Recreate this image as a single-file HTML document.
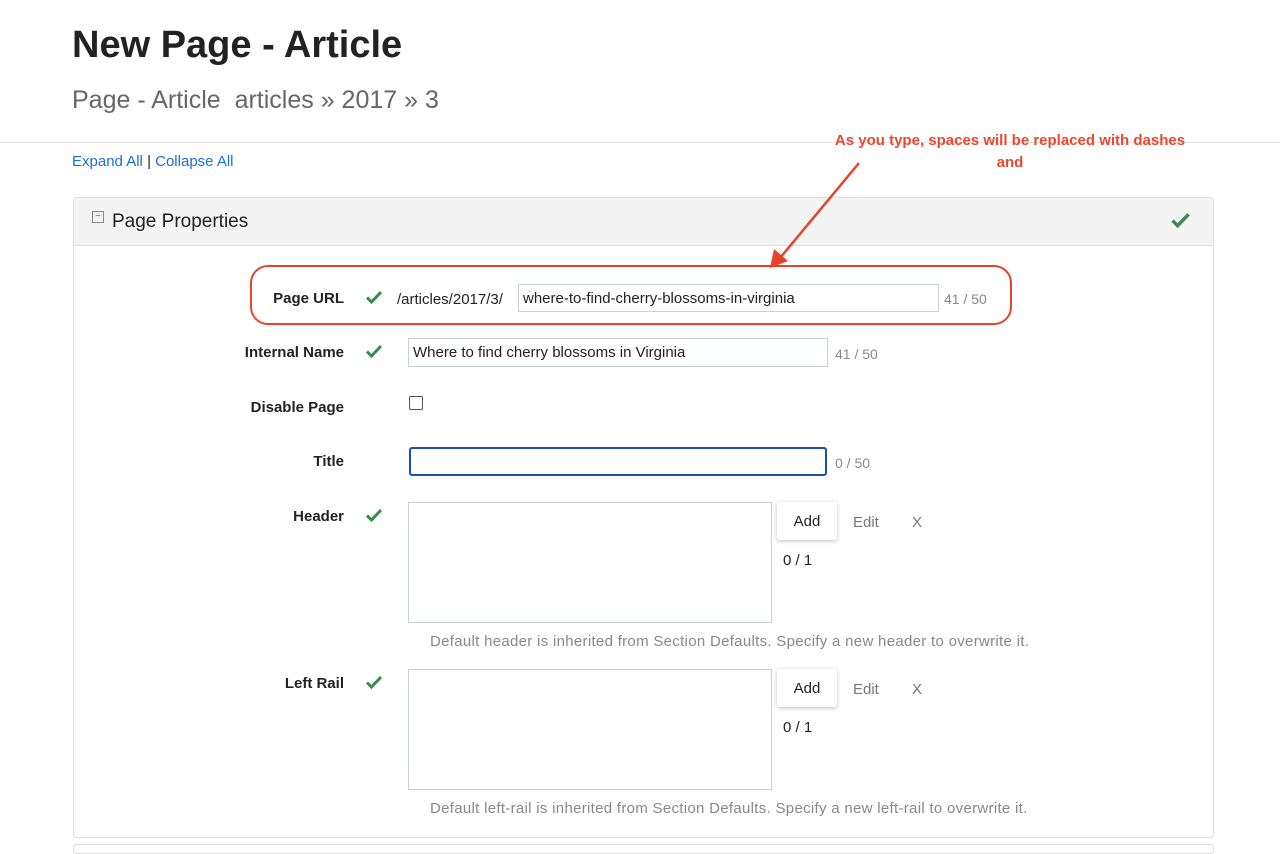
<!DOCTYPE html>
<html><head><meta charset="utf-8"><style>
*{box-sizing:border-box;margin:0;padding:0}
body{width:1280px;height:848px;overflow:hidden;background:#fff;font-family:"Liberation Sans",sans-serif;color:#222;position:relative}
.a{position:absolute;white-space:nowrap}
.lbl{font-weight:bold;font-size:15px;color:#222;text-align:right;width:200px}
.chk{position:absolute;width:16px;height:14px}
.inp{position:absolute;border:1px solid #c8d0dc;background:#fff;font-size:15px;padding:5px 4px 0;color:#222}
.cnt{font-size:14px;color:#888}
.btn{position:absolute;width:60px;height:38px;background:#fff;border-radius:3px;box-shadow:0 1px 4px rgba(0,0,0,.25);font-size:15px;text-align:center;line-height:40px}
.gray{color:#777;font-size:15px}
.help{font-size:15px;color:#888;letter-spacing:0.3px}
</style></head><body>
<div class="a" style="left:72px;top:24px;font-size:38px;font-weight:bold;color:#222">New Page - Article</div>
<div class="a" style="left:72px;top:86px;font-size:25px;color:#666">Page - Article&nbsp; articles » 2017 » 3</div>
<div class="a" style="left:0;top:142px;width:1280px;border-top:1px solid #e3e3e3"></div>
<div class="a" style="left:72px;top:153px;font-size:15px;color:#1a6fd8">Expand All <span style="color:#222">|</span> Collapse All</div>
<div class="a" style="left:810px;top:130px;width:400px;text-align:center;font-size:15px;font-weight:bold;color:#e8492f;line-height:22px;white-space:normal">As you type, spaces will be replaced with dashes<br>and</div>
<div class="a" style="left:73px;top:197px;width:1141px;height:641px;border:1px solid #ddd;border-radius:4px"></div>
<div class="a" style="left:74px;top:198px;width:1139px;height:48px;background:#f4f4f4;border-bottom:1px solid #ddd;border-radius:4px 4px 0 0"></div>
<div class="a" style="left:92px;top:211px;width:12px;height:12px;border:1px solid #888;font-size:10px;line-height:9px;text-align:center;color:#666">−</div>
<div class="a" style="left:112px;top:211px;font-size:19px;color:#222">Page Properties</div>
<svg class="chk" style="left:1171px;top:212px;width:19px;height:16px" viewBox="0 0 16 14"><path d="M1 7.5l4.5 4.5L15 2" fill="none" stroke="#3c8a4f" stroke-width="3"/></svg>
<div class="a" style="left:250px;top:265px;width:762px;height:60px;border:2px solid #e5432b;border-radius:18px"></div>
<div class="a lbl" style="left:144px;top:290px">Page URL</div>
<svg class="chk" style="left:366px;top:290px" viewBox="0 0 16 14"><path d="M1 7.5l4.5 4.5L15 2" fill="none" stroke="#3c8a4f" stroke-width="3"/></svg>
<div class="a" style="left:397px;top:291px;font-size:15px">/articles/2017/3/</div>
<div class="inp" style="left:518px;top:284px;width:421px;height:28px">where-to-find-cherry-blossoms-in-virginia</div>
<div class="a cnt" style="left:944px;top:291px">41 / 50</div>
<div class="a lbl" style="left:144px;top:344px">Internal Name</div>
<svg class="chk" style="left:366px;top:344px" viewBox="0 0 16 14"><path d="M1 7.5l4.5 4.5L15 2" fill="none" stroke="#3c8a4f" stroke-width="3"/></svg>
<div class="inp" style="left:408px;top:338px;width:420px;height:29px">Where to find cherry blossoms in Virginia</div>
<div class="a cnt" style="left:835px;top:346px">41 / 50</div>
<div class="a lbl" style="left:144px;top:399px">Disable Page</div>
<div class="a" style="left:409px;top:396px;width:14px;height:14px;border:1px solid #555;border-radius:2px"></div>
<div class="a lbl" style="left:144px;top:453px">Title</div>
<div class="a" style="left:409px;top:447px;width:418px;height:29px;border:2px solid #1b4fa8;border-radius:3px"></div>
<div class="a cnt" style="left:835px;top:455px">0 / 50</div>
<div class="a lbl" style="left:144px;top:508px">Header</div>
<svg class="chk" style="left:366px;top:508px" viewBox="0 0 16 14"><path d="M1 7.5l4.5 4.5L15 2" fill="none" stroke="#3c8a4f" stroke-width="3"/></svg>
<div class="inp" style="left:408px;top:502px;width:364px;height:121px"></div>
<div class="btn" style="left:777px;top:502px">Add</div>
<div class="a gray" style="left:853px;top:514px">Edit</div>
<div class="a gray" style="left:912px;top:514px">X</div>
<div class="a" style="left:783px;top:552px;font-size:15px">0 / 1</div>
<div class="a help" style="left:430px;top:633px">Default header is inherited from Section Defaults. Specify a new header to overwrite it.</div>
<div class="a lbl" style="left:144px;top:675px">Left Rail</div>
<svg class="chk" style="left:366px;top:675px" viewBox="0 0 16 14"><path d="M1 7.5l4.5 4.5L15 2" fill="none" stroke="#3c8a4f" stroke-width="3"/></svg>
<div class="inp" style="left:408px;top:669px;width:364px;height:121px"></div>
<div class="btn" style="left:777px;top:669px">Add</div>
<div class="a gray" style="left:853px;top:681px">Edit</div>
<div class="a gray" style="left:912px;top:681px">X</div>
<div class="a" style="left:783px;top:719px;font-size:15px">0 / 1</div>
<div class="a help" style="left:430px;top:800px">Default left-rail is inherited from Section Defaults. Specify a new left-rail to overwrite it.</div>
<div class="a" style="left:73px;top:844px;width:1141px;height:10px;border:1px solid #ddd;border-radius:4px"></div>
<svg class="a" style="left:0;top:0" width="1280" height="848"><line x1="859" y1="163" x2="780" y2="258" stroke="#e5432b" stroke-width="2.5"/><polygon points="770,268 774,249 788,261" fill="#e5432b"/></svg>
</body></html>
